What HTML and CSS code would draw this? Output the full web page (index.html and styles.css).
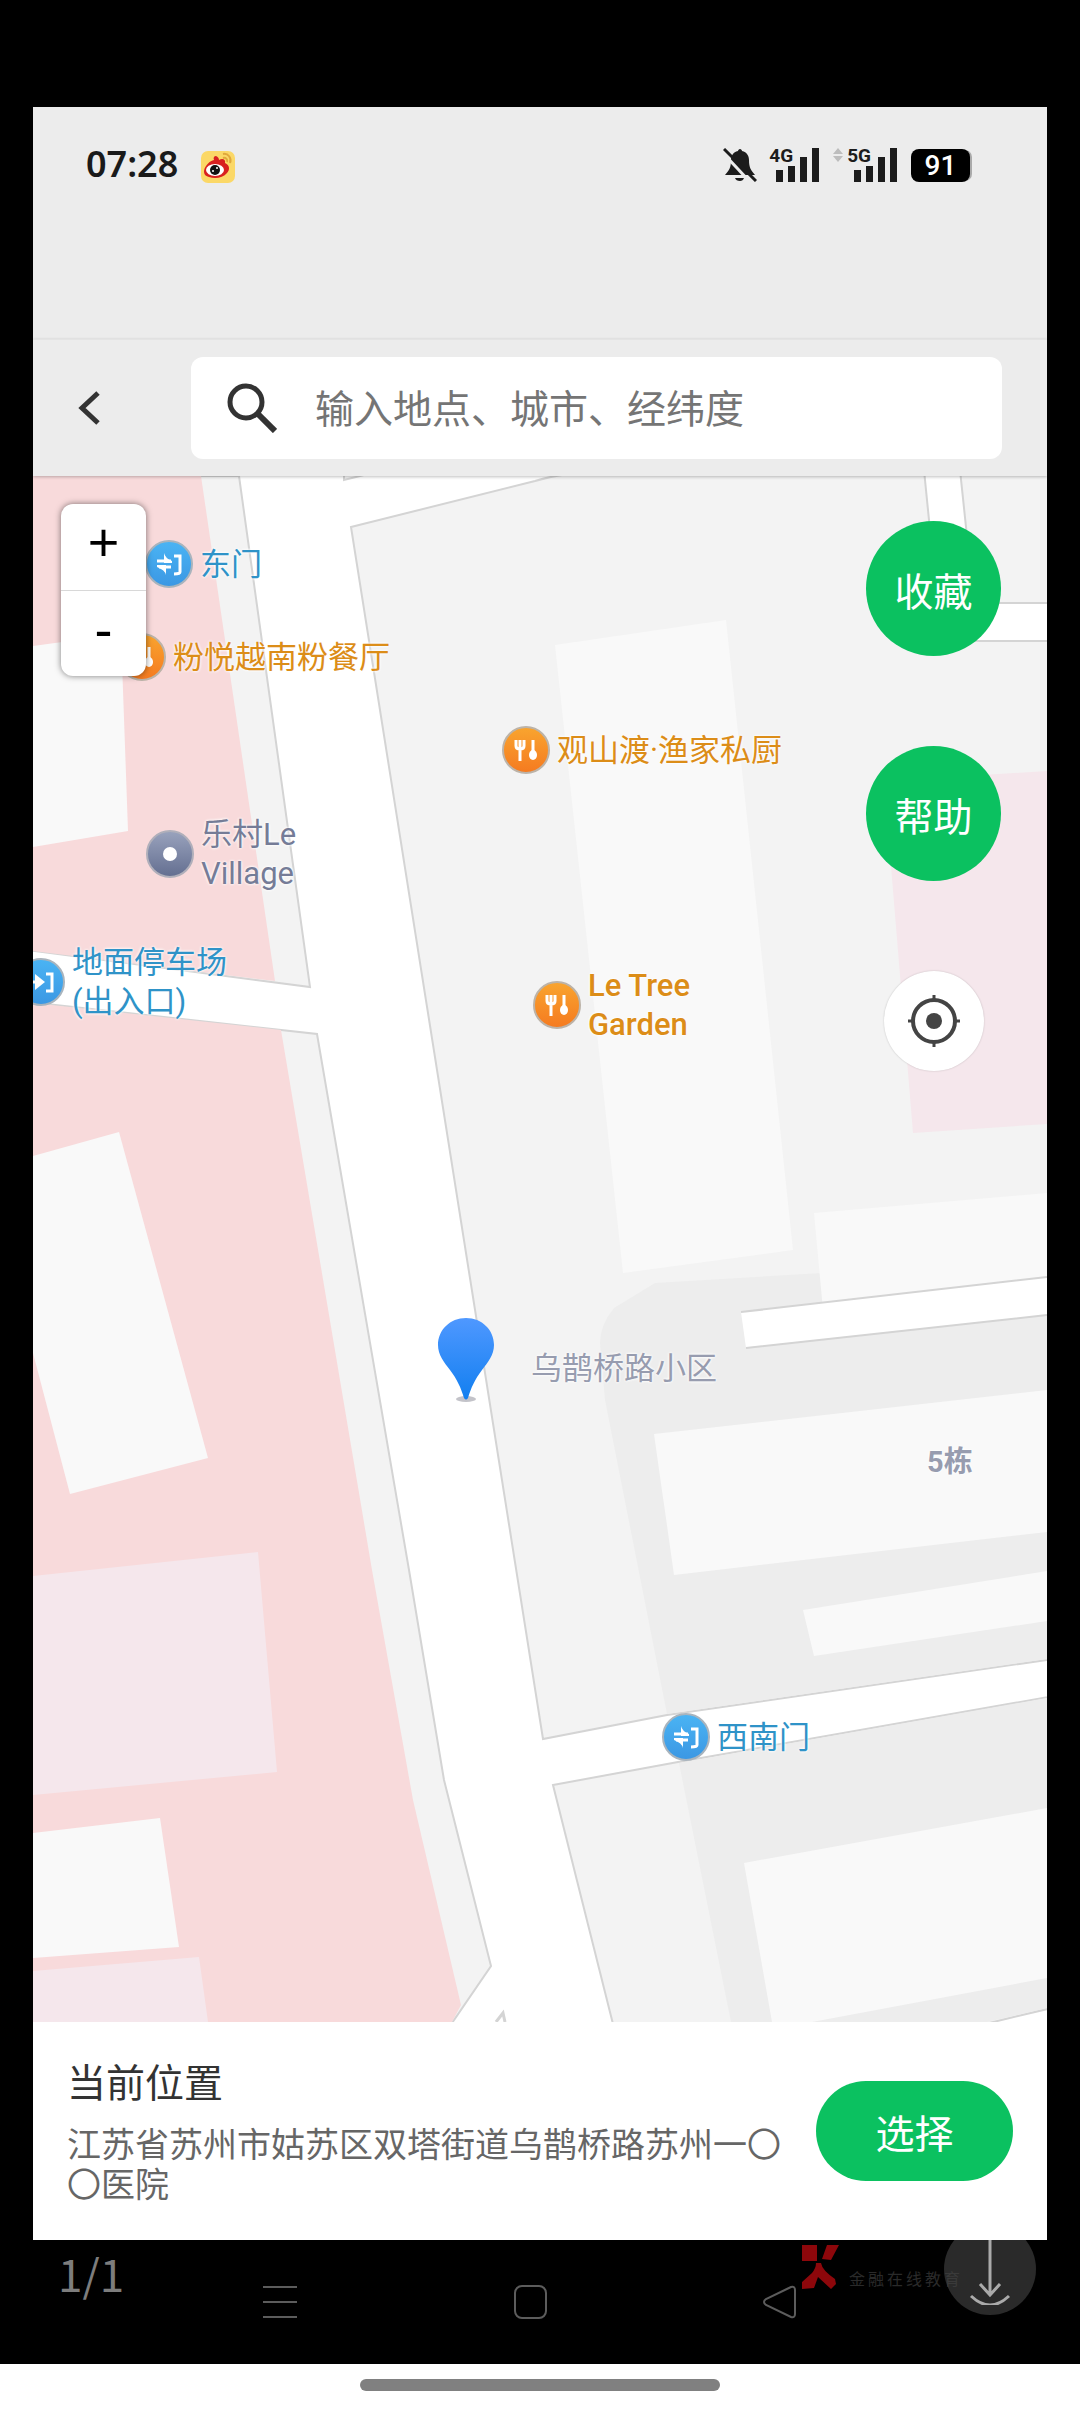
FILE: index.html
```html
<!DOCTYPE html>
<html lang="zh-CN">
<head>
    <meta charset="UTF-8">
    <meta name="viewport" content="width=device-width, initial-scale=1.0">
    <title>选择位置</title>
    <link rel="stylesheet" href="styles.css">
</head>
<body>
    <!-- Shared POI icons -->
    <svg class="icon-defs" aria-hidden="true">
        <defs>
            <linearGradient id="blueFill" x1="0" y1="0" x2="0" y2="1">
                <stop offset="0" stop-color="#4ab4f4"/>
                <stop offset="1" stop-color="#3b97e3"/>
            </linearGradient>
            <linearGradient id="orangeFill" x1="0" y1="0" x2="0" y2="1">
                <stop offset="0" stop-color="#f9a52f"/>
                <stop offset="1" stop-color="#f57a20"/>
            </linearGradient>
            <linearGradient id="greyFill" x1="0" y1="0" x2="0" y2="1">
                <stop offset="0" stop-color="#9aa3bd"/>
                <stop offset="1" stop-color="#636e90"/>
            </linearGradient>
            <symbol id="gate" viewBox="0 0 48 48">
                <circle cx="24" cy="24" r="23" fill="url(#blueFill)" stroke="#a9b4bd" stroke-width="2"/>
                <path d="M12 21h14M26 27H14M29 16h6v16q0 2-6 2" fill="none" stroke="#fff" stroke-width="3"/>
                <path d="M19 13q1 5 8 8v2h-8zM21 35q-1-5-9-8v-2h9z" fill="#fff"/>
            </symbol>
            <symbol id="entrance" viewBox="0 0 48 48">
                <circle cx="24" cy="24" r="23" fill="url(#blueFill)" stroke="#a9b4bd" stroke-width="2"/>
                <path d="M12 24h10M29 16h6v17h-6" fill="none" stroke="#fff" stroke-width="3"/>
                <path d="M18 16l10 8-10 8z" fill="#fff"/>
            </symbol>
            <symbol id="food" viewBox="0 0 48 48">
                <circle cx="24" cy="24" r="23" fill="url(#orangeFill)" stroke="#bcb3a8" stroke-width="2"/>
                <path d="M14 14v6q0 3 4 3t4-3v-6M18 14v21M31 14v14" fill="none" stroke="#fff" stroke-width="3"/>
                <ellipse cx="31" cy="29" rx="4" ry="5" fill="#fff"/>
            </symbol>
            <symbol id="place" viewBox="0 0 48 48">
                <circle cx="24" cy="24" r="23" fill="url(#greyFill)" stroke="#b0afba" stroke-width="2"/>
                <circle cx="24" cy="24" r="7" fill="#fff"/>
            </symbol>
        </defs>
    </svg>

    <main class="screen">
        <div class="status-bar">
            <span class="time">07:28</span>
            <svg class="weibo" viewBox="0 0 34 32">
                <rect width="34" height="32" rx="7" fill="#fbd867"/>
                <path d="M3 20c1-6 6-10 10-11-1-2 0-4 2-4 2 1 3 2 3 4 3-2 7-1 6 3 5 2 5 7 2 10-4 5-12 6-18 4-4-1-5-3-5-6z" fill="#d8201f"/>
                <ellipse cx="14" cy="19" rx="9" ry="6" fill="#fff"/>
                <circle cx="14" cy="19" r="5" fill="#111"/>
                <circle cx="12" cy="20" r="1" fill="#fff"/>
                <circle cx="16" cy="17" r="1" fill="#fff"/>
                <path d="M22 3c5-1 9 4 7 9M22 7c3-1 5 2 4 4" fill="none" stroke="#e0a83c" stroke-width="2"/>
            </svg>

            <div class="status-icons">
                <svg class="bell" viewBox="0 0 34 34">
                    <path d="M17 1c-1 0-2 1-2 2-5 1-7 5-7 9 0 8-2 10-6 15h30c-4-5-6-7-6-15 0-4-2-8-7-9 0-1-1-2-2-2zM12 30h9q-1 3-4 3-4 0-5-3z" fill="#1c1c1c"/>
                    <path d="M0 5l28 30" stroke="#ececec" stroke-width="3"/>
                    <path d="M1 1l32 32" stroke="#1c1c1c" stroke-width="3"/>
                </svg>
                <div class="signal">
                    <span>4G</span>
                    <svg viewBox="0 0 44 36"><path d="M1 23h7v12H1zM13 19h7v16h-7zM25 10h7v25h-7zM37 1h7v34h-7z"/></svg>
                </div>
                <div class="signal">
                    <svg class="traffic" viewBox="0 0 10 36"><path d="M5 1l5 6H0zM5 15l5-6H0z"/></svg>
                    <span>5G</span>
                    <svg viewBox="0 0 44 36"><path d="M1 23h7v12H1zM13 19h7v16h-7zM25 10h7v25h-7zM37 1h7v34h-7z"/></svg>
                </div>
                <span class="battery">91</span>
            </div>
        </div>

        <header class="search-bar">
            <button class="back-btn" type="button" aria-label="返回">
                <svg viewBox="0 0 22 34"><path d="M20 2L4 17l16 15" fill="none" stroke="#333" stroke-width="5"/></svg>
            </button>
            <label class="search-box">
                <svg viewBox="0 0 50 50" aria-hidden="true">
                    <circle cx="19" cy="19" r="16" fill="none" stroke="#333" stroke-width="5"/>
                    <path d="M31 31l17 17" stroke="#333" stroke-width="6"/>
                </svg>
                <input type="text" placeholder="输入地点、城市、经纬度" aria-label="搜索地点">
            </label>
        </header>

        <section class="map">
            <svg class="map-tiles" viewBox="33 476 1014 1546" preserveAspectRatio="xMidYMid slice" aria-hidden="true">
                <rect x="33" y="476" width="1014" height="1546" fill="#fff"/>

                <!-- West side -->
                <path class="edge" d="M20 476H239L310 987 20 949zM20 1001L317 1034 409 1570 444 1780 491 1966 452 2023H20z" fill="#f3f3f3"/>
                <path d="M33 476H201L275 981 33 951zM33 1003L281 1030 372 1570 413 1800 461 2005 452 2022H33z" fill="#f8dadb"/>
                <path d="M33 646L121 634 128 831 33 847zM33 1156L119 1132 208 1458 70 1494 33 1353zM33 1833L160 1818 179 1947 33 1958z" fill="#f9f9f9"/>
                <path d="M33 1576L258 1552 277 1772 33 1795zM33 1971L199 1957 208 2022H33z" fill="#f5e7ec"/>

                <!-- East side -->
                <path class="edge" d="M344 474v6l24-6zM351 527L535 481Q548 477 562 475H1060V1658L667 1715 543 1739z" fill="#f3f3f3"/>
                <path class="edge" d="M553 1785L678 1762 1060 1695V2006L985 2024H613z" fill="#f3f3f3"/>
                <path d="M822 1273L655 1283 614 1308Q600 1325 600 1343L605 1400 667 1714 1047 1659V1270zM679 1763L1047 1698V2008L987 2022H731z" fill="#ededed"/>
                <path d="M555 645L726 620 793 1250 623 1273zM814 1213L1047 1193V1290L823 1310zM654 1434L1047 1390V1532L674 1575zM803 1610L1047 1571V1621L814 1656zM744 1863L1047 1808V1978L812 2022H772z" fill="#f9f9f9"/>
                <path d="M884 781L1047 771V1124L913 1133z" fill="#f5e7ec"/>
                <path d="M741 1312L1047 1277V1315L746 1348z" fill="#fff"/>
                <path class="edge" d="M741 1312L1047 1277M1047 1315L746 1348" fill="none"/>
                <path class="edge" d="M924 470L936 590Q940 641 980 641H1060V603H974L960 470z" fill="#fff"/>
                <path d="M496 2022l7-9 2 9" fill="none" stroke="#d4d4d4" stroke-width="3"/>
            </svg>

            <div class="poi gate east-gate"><svg><use href="#gate"/></svg><span>东门</span></div>
            <div class="poi food pho"><svg><use href="#food"/></svg><span>粉悦越南粉餐厅</span></div>
            <div class="poi place village"><svg><use href="#place"/></svg><span>乐村Le<br>Village</span></div>
            <div class="poi gate parking"><svg><use href="#entrance"/></svg><span>地面停车场<br>(出入口)</span></div>
            <div class="poi food fish"><svg><use href="#food"/></svg><span>观山渡·渔家私厨</span></div>
            <div class="poi food garden"><svg><use href="#food"/></svg><span>Le Tree<br>Garden</span></div>
            <div class="poi gate southwest-gate"><svg><use href="#gate"/></svg><span>西南门</span></div>
            <div class="poi area estate">乌鹊桥路小区</div>
            <div class="poi area building">5栋</div>

            <svg class="pin" viewBox="0 0 58 84" aria-hidden="true">
                <defs>
                    <linearGradient id="pinFill" x1="0" y1="0" x2="0" y2="1">
                        <stop offset="0" stop-color="#4f98ff"/>
                        <stop offset="1" stop-color="#127ff0"/>
                    </linearGradient>
                </defs>
                <ellipse cx="29" cy="81" rx="10" ry="3" fill="#c3c3c9"/>
                <path d="M29 0C13 0 1 12 1 27c0 10 6 17 12 25 7 9 11 18 14 28q2 3 4 0c3-10 7-19 14-28 6-8 12-15 12-25C57 12 45 0 29 0z" fill="url(#pinFill)"/>
            </svg>

            <div class="zoom-control">
                <button type="button" aria-label="放大">+</button>
                <button type="button" aria-label="缩小">-</button>
            </div>

            <div class="map-actions">
                <button class="round-btn" type="button">收藏</button>
                <button class="round-btn" type="button">帮助</button>
                <button class="locate-btn" type="button" aria-label="定位">
                    <svg viewBox="0 0 52 52">
                        <circle cx="26" cy="26" r="21" fill="none" stroke="#444" stroke-width="4"/>
                        <circle cx="26" cy="26" r="8" fill="#444"/>
                        <path d="M26 0v7M26 45v7M0 26h7M45 26h7" stroke="#444" stroke-width="3"/>
                    </svg>
                </button>
            </div>
        </section>

        <section class="location-panel">
            <div class="location-text">
                <h1>当前位置</h1>
                <p>江苏省苏州市姑苏区双塔街道乌鹊桥路苏州一〇〇医院</p>
            </div>
            <button class="select-btn" type="button">选择</button>
        </section>
    </main>

    <footer class="viewer-bar">
        <nav class="system-nav">
            <button type="button" aria-label="菜单">
                <svg viewBox="0 0 34 34"><path d="M0 2h34M0 17h34M0 32h34"/></svg>
            </button>
            <button type="button" aria-label="主页">
                <svg viewBox="0 0 34 34"><rect x="2" y="1" width="31" height="32" rx="7"/></svg>
            </button>
            <button type="button" aria-label="后退">
                <svg viewBox="0 0 34 34"><path d="M28 2L3 14q-4 3 0 6l25 12q4 1 4-3V5q0-4-4-3z"/></svg>
            </button>
        </nav>

        <span class="page-count">1/1</span>

        <div class="watermark">
            <svg viewBox="0 0 40 46" aria-hidden="true">
                <path d="M1 1h15v16H1zM26 1h12l-8 15-9-1zM15 19h5q1 7 14 16l1 5-5 5-13-12-4 11-12 1v-7l10-9q4-5 4-10z" fill="#8d070b"/>
            </svg>
            <span>金融在线教育</span>
        </div>

        <button class="download-btn" type="button" aria-label="下载">
            <svg viewBox="0 0 44 72"><path d="M22 0v61M12 51l10 11 10-11M3 63q19 18 38 0"/></svg>
        </button>
    </footer>

    <div class="gesture-bar"><span></span></div>
</body>
</html>
```
FILE: styles.css
```css
* {
    margin: 0;
    padding: 0;
    box-sizing: border-box;
}

body {
    font-family: Roboto, "Noto Sans CJK SC", sans-serif;
    background: #000;
    color: #333;
    min-height: 100vh;
    display: flex;
    flex-direction: column;
    padding-top: 107px;
}

button {
    border: none;
    background: none;
    font-family: inherit;
    cursor: pointer;
}

svg {
    display: block;
    flex: none;
}

.icon-defs {
    position: absolute;
    width: 0;
    height: 0;
}

.screen {
    flex: 1;
    display: flex;
    flex-direction: column;
    margin: 0 33px;
    background: #fff;
}

/* Status bar */
.status-bar {
    display: flex;
    align-items: flex-start;
    height: 232px;
    padding: 40px 77px 0 53px;
    background: #ececec;
}

.time {
    font-family: "Noto Sans", sans-serif;
    font-size: 36px;
    font-weight: 600;
    line-height: 34px;
    color: #1a1a1a;
}

.weibo {
    width: 34px;
    height: 32px;
    margin: 4px 0 0 23px;
}

.status-icons {
    display: flex;
    align-items: center;
    margin-left: auto;
}

.bell {
    width: 34px;
    height: 34px;
    margin-right: 12px;
}

/* network label overlaps the low bars, as on the phone */
.signal {
    display: flex;
    margin-right: 14px;
}

.signal span {
    margin-right: -18px;
    font-size: 19px;
    font-weight: 700;
    line-height: 18px;
    color: #1c1c1c;
}

.signal svg {
    width: 44px;
    height: 36px;
    fill: #1c1c1c;
}

.signal .traffic {
    width: 10px;
    margin-right: 4px;
    fill: #bdbdbd;
}

.battery {
    width: 59px;
    height: 33px;
    border-radius: 8px;
    background: #000;
    box-shadow: 3px 0 0 -1px #aaa;
    color: #fff;
    font-size: 28px;
    font-weight: 500;
    line-height: 34px;
    text-align: center;
}

/* Search */
.search-bar {
    display: flex;
    align-items: center;
    height: 137px;
    padding: 0 45px;
    border-top: 1px solid #e4e4e4;
    background: #ececec;
    box-shadow: 0 1px 3px rgba(0, 0, 0, 0.25);
    position: relative;
    z-index: 1;
}

.back-btn {
    width: 113px;
    height: 100px;
}

.back-btn svg {
    width: 22px;
    height: 34px;
}

.search-box {
    flex: 1;
    display: flex;
    align-items: center;
    gap: 38px;
    height: 102px;
    padding: 0 36px;
    border-radius: 12px;
    background: #fff;
}

.search-box svg {
    width: 50px;
    height: 50px;
}

.search-box input {
    flex: 1;
    min-width: 0;
    padding-top: 3px;
    border: none;
    outline: none;
    background: none;
    font-family: inherit;
    font-size: 39px;
    line-height: 60px;
}

.search-box input::placeholder {
    color: #757575;
}

/* Map */
.map {
    flex: 1;
    position: relative;
    overflow: hidden;
}

.map-tiles {
    position: absolute;
    width: 100%;
    height: 100%;
}

.edge {
    stroke: #d4d4d4;
    stroke-width: 2;
}

.poi {
    position: absolute;
    display: flex;
    align-items: center;
    gap: 7px;
    font-size: 31px;
    line-height: 39px;
    white-space: nowrap;
    text-shadow: 0 0 3px #fff, 0 0 3px #fff;
}

.poi svg {
    width: 48px;
    height: 48px;
}

.gate {
    color: #2f93c8;
}

.food {
    color: #dc8d18;
}

.place {
    color: #757c97;
}

.area {
    color: #979caf;
}

.east-gate { left: 112px; top: 64px; }
.pho { left: 85px; top: 157px; }
.village { left: 113px; top: 339px; }
.parking { left: -16px; top: 467px; }
.fish { left: 469px; top: 250px; }
.garden { left: 500px; top: 490px; font-weight: 500; }
.southwest-gate { left: 629px; top: 1237px; }
.estate { left: 498px; top: 873px; }
.building { left: 894px; top: 967px; font-size: 29px; font-weight: 700; }

.pin {
    position: absolute;
    left: 404px;
    top: 842px;
    width: 58px;
    height: 84px;
}

.zoom-control {
    position: absolute;
    left: 28px;
    top: 28px;
    width: 85px;
    border-radius: 12px;
    background: #fff;
    box-shadow: 0 0 6px rgba(0, 0, 0, 0.5);
}

.zoom-control button {
    display: block;
    width: 100%;
    height: 86px;
    padding-bottom: 10px;
    font-family: "Liberation Sans", sans-serif;
    font-size: 54px;
    line-height: 76px;
    color: #000;
}

.zoom-control button + button {
    border-top: 1px solid #d8d8d8;
}

.map-actions {
    position: absolute;
    top: 45px;
    right: 46px;
    display: flex;
    flex-direction: column;
    align-items: center;
    gap: 90px;
}

.round-btn {
    width: 135px;
    height: 135px;
    border-radius: 50%;
    background: #0bc160;
    color: #fff;
    font-size: 39px;
}

.locate-btn {
    display: flex;
    align-items: center;
    justify-content: center;
    width: 100px;
    height: 100px;
    border-radius: 50%;
    background: #fff;
    box-shadow: 0 0 2px rgba(0, 0, 0, 0.2);
}

.locate-btn svg {
    width: 52px;
    height: 52px;
}

/* Current location */
.location-panel {
    display: flex;
    align-items: center;
    gap: 30px;
    padding: 35px 34px;
    background: #fff;
}

.location-text {
    flex: 1;
}

.location-text h1 {
    margin-bottom: 14px;
    font-size: 39px;
    font-weight: 400;
    line-height: 54px;
}

.location-text p {
    font-size: 34px;
    line-height: 40px;
    color: #666;
}

.select-btn {
    width: 197px;
    height: 100px;
    border-radius: 50px;
    background: #0bc160;
    color: #fff;
    font-size: 39px;
}

/* Viewer controls under the screen */
.viewer-bar {
    position: relative;
    overflow: hidden;
    height: 124px;
}

.system-nav {
    display: flex;
    justify-content: space-between;
    padding: 45px 283px 0 263px;
}

.system-nav svg {
    width: 34px;
    height: 34px;
    fill: none;
    stroke: #5c5c5c;
    stroke-width: 2;
}

.page-count {
    position: absolute;
    left: 58px;
    top: 3px;
    font-family: "Noto Sans CJK SC", sans-serif;
    font-size: 44px;
    line-height: 60px;
    color: #7d7d7d;
}

.watermark {
    position: absolute;
    left: 801px;
    top: 4px;
    display: flex;
    align-items: flex-end;
    gap: 8px;
    color: #2a2a2a;
    font-size: 16px;
    letter-spacing: 3px;
    line-height: 20px;
}

.watermark svg {
    width: 40px;
    height: 46px;
}

.download-btn {
    position: absolute;
    right: 44px;
    top: -17px;
    width: 92px;
    height: 92px;
    border-radius: 50%;
    background: rgba(70, 70, 70, 0.6);
}

.download-btn svg {
    width: 44px;
    height: 72px;
    margin: 0 auto;
    fill: none;
    stroke: #aaa;
    stroke-width: 3;
}

.gesture-bar {
    display: flex;
    justify-content: center;
    height: 48px;
    padding-top: 15px;
    background: #fff;
}

.gesture-bar span {
    width: 360px;
    height: 12px;
    border-radius: 6px;
    background: #808080;
}
```
